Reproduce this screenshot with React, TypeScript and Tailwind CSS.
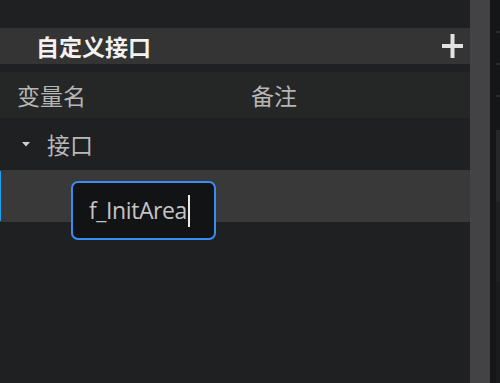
export default function App() {
  const cjk = { fontFamily: '"Noto Sans CJK SC", "Noto Sans", sans-serif' };

  return (
    <div className="flex h-[383px] w-[500px] overflow-hidden bg-[#1f2022]" style={cjk}>
      {/* main panel */}
      <div className="relative flex flex-1 flex-col">
        <div className="h-[28px]" />
        <div className="flex h-[36px] items-center bg-[#333433] pl-[36px] pr-[7px]">
          <span className="text-[23px] font-bold leading-none text-[#f2f2f2]">自定义接口</span>
          <svg className="ml-auto" width="21" height="24" viewBox="0 0 21 24">
            <rect x="0" y="10" width="21" height="4" fill="#e2e2e2" />
            <rect x="8.5" y="0" width="4" height="24" fill="#e2e2e2" />
          </svg>
        </div>
        <div className="h-[8px]" />
        <div className="flex h-[46px] items-center bg-[#252626] text-[23px] leading-none text-[#b6b6b6]">
          <span className="w-[251px] pl-[17px]">变量名</span>
          <span>备注</span>
        </div>
        <div className="flex h-[52px] items-center text-[23px] leading-none text-[#b9b9b9]">
          <svg className="ml-[22px] mr-[17px]" width="8" height="5" viewBox="0 0 8 5">
            <path d="M0 0 L8 0 L4 4.5 Z" fill="#cfcfcf" />
          </svg>
          <span>接口</span>
        </div>
        <div className="flex h-[52px] bg-[#39393a]">
          <div className="my-[1px] w-[1px] bg-[#18a0f2]" />
        </div>
        <div className="flex-1" />

        {/* inline editor */}
        <div className="absolute left-[71px] top-[181px] flex h-[59px] w-[145px] items-center rounded-[7px] border-2 border-[#3a8cf2] bg-[#121315] pl-[16px]">
          <span className="text-[23px] leading-none tracking-[-0.4px] text-[#c4c4c4]" style={{ fontFamily: '"Open Sans", sans-serif' }}>
            f_InitArea
          </span>
          <span className="ml-[1px] h-[32px] w-[2px] bg-[#e8e8e8]" />
        </div>
      </div>

      {/* scrollbar */}
      <div className="w-[20px] bg-[#434345]" />

      {/* far right strip */}
      <div className="flex w-[10px] bg-[#151618]">
        <div className="w-[6px]" />
        <div className="flex flex-1 flex-col">
          <div className="h-[31px]" />
          <div className="h-[2px] bg-[#2c2c2e]" />
          <div className="h-[30px]" />
          <div className="h-[2px] bg-[#2c2c2e]" />
          <div className="h-[30px]" />
          <div className="h-[2px] bg-[#2c2c2e]" />
          <div className="h-[33px]" />
          <div className="h-[72px] bg-[#262729]" />
          <div className="h-[80px] bg-[#1e1f21]" />
          <div className="flex-1 bg-[#1a1b1d]" />
        </div>
      </div>
    </div>
  );
}
